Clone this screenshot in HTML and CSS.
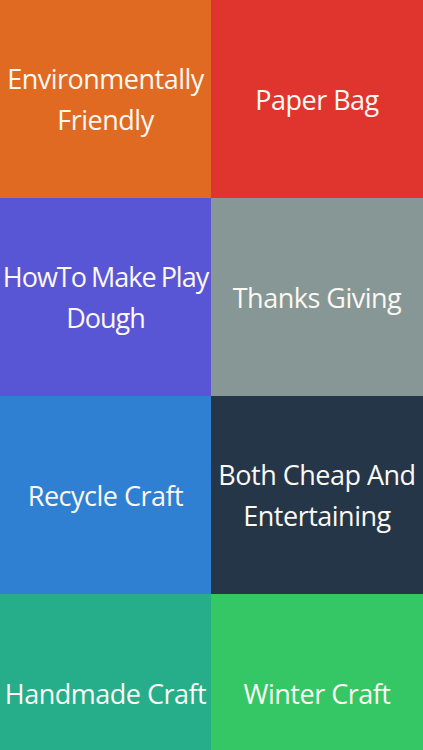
FILE: index.html
```html
<!DOCTYPE html>
<html>
<head>
<meta charset="utf-8">
<link rel="stylesheet" href="styles.css">
</head>
<body>
<div class="grid">
  <div class="tile orange"><span>Environmentally<br>Friendly</span></div>
  <div class="tile red"><span>Paper Bag</span></div>
  <div class="tile purple tight"><span>HowTo Make Play<br>Dough</span></div>
  <div class="tile gray"><span>Thanks Giving</span></div>
  <div class="tile blue"><span>Recycle Craft</span></div>
  <div class="tile navy"><span>Both Cheap And<br>Entertaining</span></div>
  <div class="tile teal"><span>Handmade Craft</span></div>
  <div class="tile green"><span>Winter Craft</span></div>
</div>
</body>
</html>
```
FILE: styles.css
```css
html, body {
  margin: 0;
  padding: 0;
  height: 750px;
  overflow: hidden;
}
.grid {
  display: grid;
  grid-template-columns: 211px 212px;
  grid-auto-rows: 198px;
}
.tile {
  display: flex;
  align-items: center;
  justify-content: center;
  text-align: center;
  white-space: nowrap;
  overflow: hidden;
  color: #fcf8f2;
  font-family: "Open Sans", sans-serif;
  font-size: 27px;
  line-height: 41px;
  letter-spacing: -0.5px;
}
.tight {
  letter-spacing: -1px;
  word-spacing: -1px;
}
.orange { background: #e06a22; }
.red { background: #e0352e; }
.purple { background: #5956d5; }
.gray { background: #869795; }
.blue { background: #2f80d2; }
.navy { background: #253649; }
.teal { background: #26ae8b; }
.green { background: #35c765; }
```
